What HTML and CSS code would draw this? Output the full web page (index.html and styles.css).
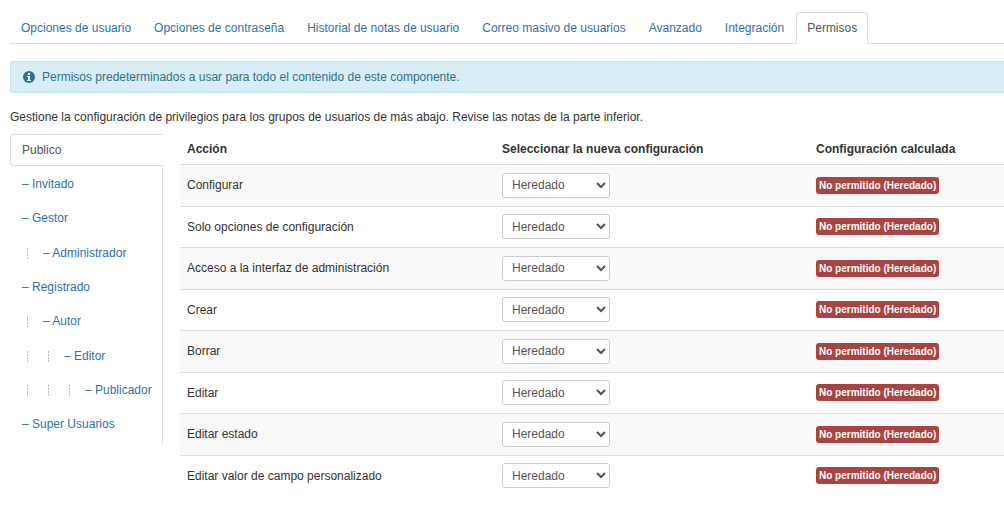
FILE: index.html
```
<!DOCTYPE html>
<html lang="es">
<head>
  <meta charset="UTF-8" />
  <title>Permisos</title>
  <link rel="stylesheet" href="styles.css">
</head>
<body>

  <!-- Component options -->
  <nav class="tabs">
    <a href="#usuario">Opciones de usuario</a>
    <a href="#contrasena">Opciones de contraseña</a>
    <a href="#historial">Historial de notas de usuario</a>
    <a href="#correo">Correo masivo de usuarios</a>
    <a href="#avanzado">Avanzado</a>
    <a href="#integracion">Integración</a>
    <a href="#permisos" class="active">Permisos</a>
  </nav>

  <div class="alert">
    <svg class="icon-info" viewBox="0 0 12 12" aria-hidden="true">
      <circle cx="6" cy="6" r="6" fill="currentColor" />
      <path d="M5 2h2v2H5zM4 5h3v4h1v1H4V9h1V6H4z" fill="#d9edf7" />
    </svg>
    <span>Permisos predeterminados a usar para todo el contenido de este componente.</span>
  </div>

  <p class="intro">Gestione la configuración de privilegios para los grupos de usuarios de más abajo. Revise las notas de la parte inferior.</p>

  <div class="permissions">
    <!-- User groups -->
    <ul class="groups">
      <li class="active"><a href="#grupo-1">Publico</a></li>
      <li><a href="#grupo-2">– Invitado</a></li>
      <li><a href="#grupo-3">– Gestor</a></li>
      <li><a href="#grupo-4"><span class="guide"></span>– Administrador</a></li>
      <li><a href="#grupo-5">– Registrado</a></li>
      <li><a href="#grupo-6"><span class="guide"></span>– Autor</a></li>
      <li><a href="#grupo-7"><span class="guide"></span><span class="guide"></span>– Editor</a></li>
      <li><a href="#grupo-8"><span class="guide"></span><span class="guide"></span><span class="guide"></span>– Publicador</a></li>
      <li><a href="#grupo-9">– Super Usuarios</a></li>
    </ul>

    <table class="rules">
      <thead>
        <tr>
          <th class="col-action">Acción</th>
          <th class="col-setting">Seleccionar la nueva configuración</th>
          <th>Configuración calculada</th>
        </tr>
      </thead>
      <tbody>
        <tr>
          <td><label for="rule-admin">Configurar</label></td>
          <td><select id="rule-admin"><option>Heredado</option><option>Permitido</option><option>Denegado</option></select></td>
          <td><span class="badge">No permitido (Heredado)</span></td>
        </tr>
        <tr>
          <td><label for="rule-options">Solo opciones de configuración</label></td>
          <td><select id="rule-options"><option>Heredado</option><option>Permitido</option><option>Denegado</option></select></td>
          <td><span class="badge">No permitido (Heredado)</span></td>
        </tr>
        <tr>
          <td><label for="rule-manage">Acceso a la interfaz de administración</label></td>
          <td><select id="rule-manage"><option>Heredado</option><option>Permitido</option><option>Denegado</option></select></td>
          <td><span class="badge">No permitido (Heredado)</span></td>
        </tr>
        <tr>
          <td><label for="rule-create">Crear</label></td>
          <td><select id="rule-create"><option>Heredado</option><option>Permitido</option><option>Denegado</option></select></td>
          <td><span class="badge">No permitido (Heredado)</span></td>
        </tr>
        <tr>
          <td><label for="rule-delete">Borrar</label></td>
          <td><select id="rule-delete"><option>Heredado</option><option>Permitido</option><option>Denegado</option></select></td>
          <td><span class="badge">No permitido (Heredado)</span></td>
        </tr>
        <tr>
          <td><label for="rule-edit">Editar</label></td>
          <td><select id="rule-edit"><option>Heredado</option><option>Permitido</option><option>Denegado</option></select></td>
          <td><span class="badge">No permitido (Heredado)</span></td>
        </tr>
        <tr>
          <td><label for="rule-state">Editar estado</label></td>
          <td><select id="rule-state"><option>Heredado</option><option>Permitido</option><option>Denegado</option></select></td>
          <td><span class="badge">No permitido (Heredado)</span></td>
        </tr>
        <tr>
          <td><label for="rule-value">Editar valor de campo personalizado</label></td>
          <td><select id="rule-value"><option>Heredado</option><option>Permitido</option><option>Denegado</option></select></td>
          <td><span class="badge">No permitido (Heredado)</span></td>
        </tr>
      </tbody>
    </table>
  </div>

</body>
</html>
```
FILE: styles.css
```
* {
  box-sizing: border-box;
}
body {
  margin: 12px 0 0 10px;
  font-family: Arial, "Liberation Sans", sans-serif;
  font-size: 12px;
  line-height: 18px;
  color: #333;
  background: #fff;
}
a {
  color: #3071a9;
  text-decoration: none;
}

/* tabs */
.tabs {
  display: flex;
  gap: 1px;
  border-bottom: 1px solid #ddd;
  margin-bottom: 17px;
}
.tabs a {
  padding: 6px 10px;
  margin-bottom: -1px;
  border: 1px solid transparent;
  border-radius: 4px 4px 0 0;
}
.tabs .active {
  color: #555;
  background: #fff;
  border-color: #ddd;
  border-bottom-color: #fff;
}

.alert {
  display: flex;
  align-items: center;
  gap: 7px;
  padding: 6px 12px;
  border: 1px solid #bce8f1;
  border-right: 0;
  border-radius: 3px 0 0 3px;
  background: #d9edf7;
  color: #31708f;
}
.icon-info {
  width: 12px;
  height: 12px;
}
.intro {
  margin: 15px 0 8px;
}

.permissions {
  display: flex;
  align-items: flex-start;
  gap: 17px;
}

/* group tree */
.groups {
  flex: none;
  width: 153px;
  margin: 0;
  padding: 0;
  list-style: none;
  border-right: 1px solid #ddd;
}
.groups li {
  margin-bottom: 2px;
}
.groups li:nth-child(3n) {
  margin-bottom: 3px;
}
.groups a {
  display: block;
  padding: 6px 11px;
  border: 1px solid transparent;
  white-space: nowrap;
}
.groups .active a {
  margin-right: -1px;
  color: #555;
  background: #fff;
  border-color: #ddd;
  border-right-color: #fff;
  border-radius: 4px 0 0 4px;
}
.guide {
  display: inline-block;
  width: 1px;
  height: 11px;
  margin: 0 15px 0 5px;
  background: repeating-linear-gradient(#bbb 0 2px, transparent 2px 3px);
  vertical-align: -2px;
}

/* rules table */
.rules {
  flex: 1;
  border-collapse: collapse;
  table-layout: fixed;
}
.rules th,
.rules td {
  padding: 0 7px;
  text-align: left;
  vertical-align: middle;
}
.rules th {
  height: 30px;
}
.rules td {
  height: 41px;
  border-top: 1px solid #ddd;
}
.rules tbody tr:nth-child(odd) td {
  height: 42px;
  background: #f9f9f9;
}
/* the last row stays white under the stripes */
.col-action {
  width: 315px;
}
.col-setting {
  width: 314px;
}
.rules select {
  display: block;
  width: 108px;
  height: 25px;
  padding: 0 5px;
  border: 1px solid #ccc;
  border-radius: 3px;
  background: #fff;
  color: #555;
  font: inherit;
}
.badge {
  display: block;
  width: fit-content;
  padding: 1px 3px;
  border-radius: 3px;
  background: #a94442;
  color: #fff;
  font-size: 10px;
  font-weight: bold;
  line-height: 15px;
  white-space: nowrap;
}
```
